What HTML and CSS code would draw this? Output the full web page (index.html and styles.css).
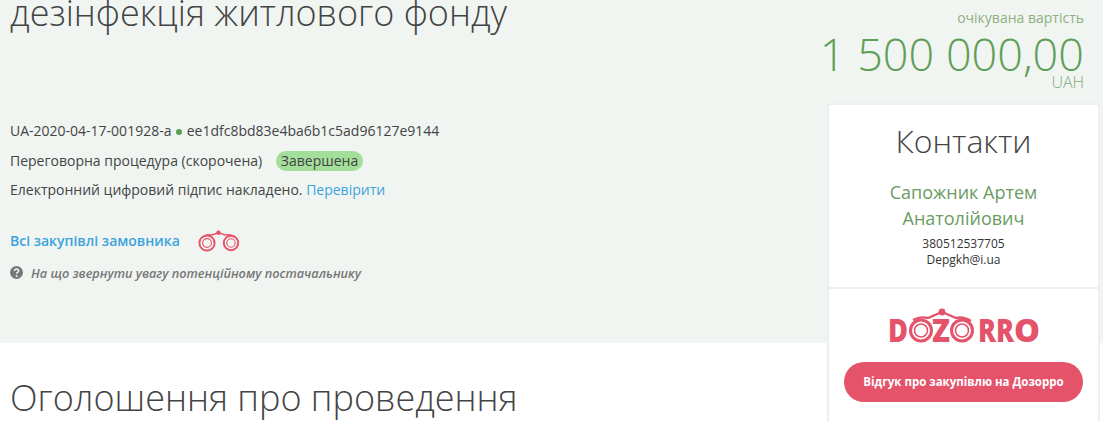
FILE: index.html
```html
<!DOCTYPE html>
<html lang="uk">
<head>
<meta charset="utf-8">
<title>Закупівля</title>
<link rel="stylesheet" href="styles.css">
</head>
<body>
<section class="hero">
  <div class="info">
    <h1 class="title">дезінфекція житлового фонду</h1>
    <p class="line first">UA-2020-04-17-001928-a <span class="dot"></span> ee1dfc8bd83e4ba6b1c5ad96127e9144</p>
    <p class="line">Переговорна процедура (скорочена) <span class="badge">Завершена</span></p>
    <p class="line">Електронний цифровий підпис накладено. <a class="link" href="#">Перевірити</a></p>
    <div class="buyer">
      <a class="buyer-link" href="#">Всі закупівлі замовника</a>
      <svg class="bino" viewBox="0 0 44 22" width="44" height="22" fill="none" stroke="#e8526b">
        <circle cx="10" cy="13" r="7.6" stroke-width="2"/>
        <circle cx="10" cy="13" r="4.4" stroke-width="1.1"/>
        <circle cx="34" cy="13" r="7.2" stroke-width="2"/>
        <circle cx="34" cy="13" r="4.2" stroke-width="1.1"/>
        <path d="M6 7 Q10 4 15 5 L21.5 2.5 L28 5 Q33 4 38 7" stroke-width="1.5"/>
        <circle cx="21.5" cy="2.8" r="2.2" fill="#e8526b" stroke="none"/>
      </svg>
    </div>
    <p class="hint">
      <svg class="hint-icon" viewBox="0 0 13 13" width="13" height="13"><circle cx="6.5" cy="6.5" r="6.5" fill="#777"/><path d="M4.4 5 Q4.6 3 6.5 3 Q8.6 3 8.6 4.8 Q8.6 5.8 7.5 6.4 Q6.6 6.9 6.6 7.8" fill="none" stroke="#f0f5f2" stroke-width="1.5"/><circle cx="6.6" cy="9.9" r="1" fill="#f0f5f2"/></svg>
      <em>На що звернути увагу потенційному постачальнику</em>
    </p>
  </div>
  <aside class="side">
    <div class="price">
      <div class="price-label">очікувана вартість</div>
      <div class="price-value">1 500 000,00</div>
      <div class="price-cur">UAH</div>
    </div>
    <div class="card">
      <div class="contacts">
        <h2 class="contacts-title">Контакти</h2>
        <div class="person">Сапожник Артем Анатолійович</div>
        <div class="small">380512537705</div>
        <div class="small">Depgkh@i.ua</div>
      </div>
      <div class="dozorro">
        <svg class="logo" viewBox="0 0 153 37" width="153" height="37">
          <g class="logo-letters">
            <text x="1" y="34" textLength="20" lengthAdjust="spacingAndGlyphs">D</text>
            <text x="45" y="34" textLength="18" lengthAdjust="spacingAndGlyphs">Z</text>
            <text x="91" y="34" textLength="18" lengthAdjust="spacingAndGlyphs">R</text>
            <text x="109" y="34" textLength="18" lengthAdjust="spacingAndGlyphs">R</text>
            <text x="127" y="34" textLength="26" lengthAdjust="spacingAndGlyphs">O</text>
          </g>
          <g fill="none" stroke="#e5536b">
            <circle cx="34" cy="22.5" r="10.5" stroke-width="3"/>
            <circle cx="34" cy="22.5" r="6.5" stroke-width="1.6"/>
            <circle cx="75" cy="22.5" r="10.5" stroke-width="3"/>
            <circle cx="75" cy="22.5" r="6.5" stroke-width="1.6"/>
            <path d="M26 12 Q33 8 41 10 L55 4 L69 10 Q76 8 84 13" stroke-width="2.4"/>
          </g>
          <circle cx="55" cy="4" r="3.4" fill="#e5536b"/>
        </svg>
        <a class="review" href="#">Відгук про закупівлю на Дозорро</a>
      </div>
    </div>
  </aside>
</section>
<h2 class="section-title">Оголошення про проведення</h2>
</body>
</html>
```

FILE: styles.css
```css
html, body {
  margin: 0;
  padding: 0;
  height: 422px;
  overflow: hidden;
  background: #fff;
  font-family: "Open Sans", sans-serif;
  color: #444;
}
.hero {
  height: 343px;
  background: #f0f5f2;
  display: flex;
  justify-content: space-between;
  padding: 0 3px 0 10px;
  box-sizing: border-box;
}
.info { width: 780px; }
.title {
  margin: -12px 0 0;
  font-size: 36px;
  line-height: 50px;
  font-weight: 300;
  color: #444;
}
.line {
  margin: 0;
  font-size: 14px;
  line-height: 29.5px;
  color: #444;
}
.first { margin-top: 78px; }
.dot {
  display: inline-block;
  width: 6px;
  height: 6px;
  margin: 0 1px 1px;
  border-radius: 50%;
  background: #5c9e52;
}
.badge {
  display: inline-block;
  margin-left: 10px;
  padding: 0 5px;
  line-height: 20px;
  border-radius: 10px;
  background: #a3df9b;
}
.link { color: #3ca3dc; text-decoration: none; }
.buyer {
  margin-top: 21px;
  display: flex;
  align-items: center;
  gap: 17px;
  height: 30px;
}
.buyer-link {
  color: #3ca3dc;
  font-size: 14px;
  font-weight: 600;
  text-decoration: none;
}
.bino { width: 44px; height: 22px; }
.hint {
  margin: 7px 0 0;
  display: flex;
  align-items: center;
  gap: 8px;
  font-size: 12.7px;
  line-height: 20px;
  font-weight: 600;
  color: #777;
}
.side {
  width: 273px;
  flex-shrink: 0;
  display: flex;
  flex-direction: column;
}
.price {
  text-align: right;
  margin-left: -10px;
  padding-right: 16px;
  height: 95px;
  margin-top: 8px;
  flex-shrink: 0;
}
.price-label { font-size: 14px; line-height: 20px; color: #8fb07f; }
.price-value {
  margin-top: 1px;
  font-size: 45px;
  line-height: 50px;
  font-weight: 300;
  color: #5f9e57;
  white-space: nowrap;
}
.price-cur { margin-top: -7px; font-size: 16px; line-height: 20px; font-weight: 300; color: #7fa97a; }
.card {
  background: #fff;
  border: 2px solid #eef0ef;
  border-bottom: 0;
  height: 330px;
  flex-shrink: 0;
  box-sizing: border-box;
  text-align: center;
}
.contacts { padding: 14px 15px 0; border-bottom: 2px solid #eef0ef; height: 184px; box-sizing: border-box; }
.contacts-title { margin: 0 0 16px; font-size: 32px; line-height: 44px; font-weight: 300; color: #444; }
.person { font-size: 18px; line-height: 26px; color: #6b9b62; padding: 0 25px; margin-bottom: 5px; }
.small { font-size: 12px; line-height: 16px; color: #333; }
.dozorro { padding-top: 19px; }
.logo { display: block; margin: 0 auto 17px; }
.logo-letters {
  font-family: "Open Sans", sans-serif;
  font-size: 31px;
  font-weight: 800;
  fill: #e5536b;
}
.review {
  display: block;
  margin: 0 15px;
  background: #e5536b;
  color: #fff;
  font-size: 11.5px;
  font-weight: 700;
  line-height: 40px;
  border-radius: 20px;
  text-decoration: none;
}
.section-title {
  margin: 30px 0 0 10px;
  font-size: 36px;
  line-height: 50px;
  font-weight: 300;
  color: #444;
}
```
